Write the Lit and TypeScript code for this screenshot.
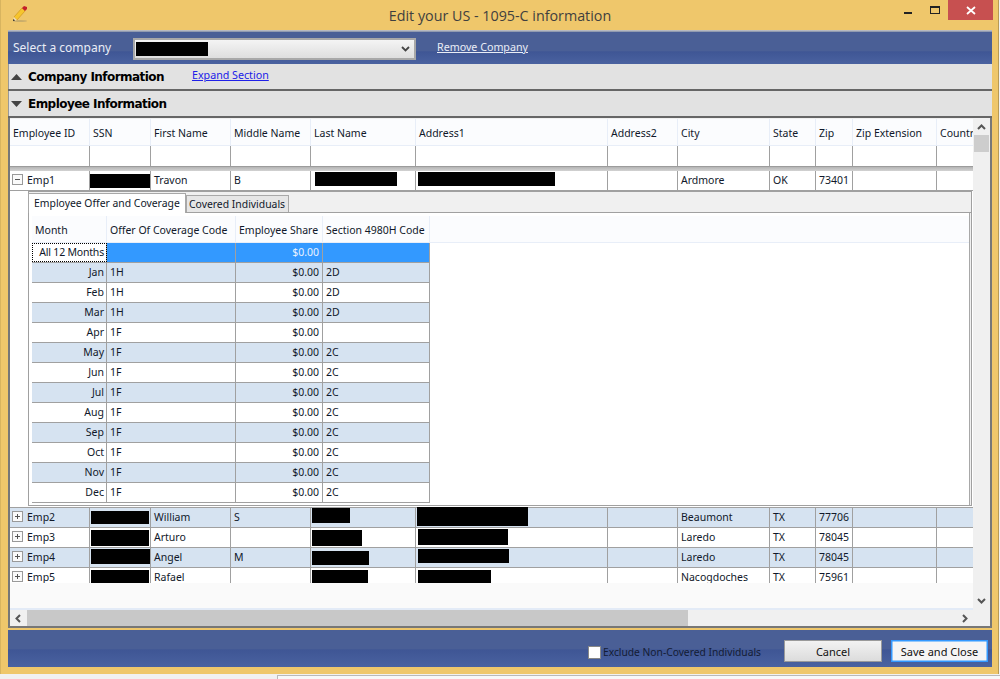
import { LitElement, html, css } from "lit";
import { customElement } from "lit/decorators.js";

type R = [number, number, number, number];
interface Emp { id: string; first: string; middle: string; city: string; state: string; zip: string; ssn: R; last: R; addr: R; }

const HEAD = ["Employee ID", "SSN", "First Name", "Middle Name", "Last Name", "Address1", "Address2", "City", "State", "Zip", "Zip Extension", "Country"];
const emps: Emp[] = [
  { id: "Emp2", first: "William", middle: "S", city: "Beaumont", state: "TX", zip: "77706", ssn: [1, 3, 58, 13], last: [1, 0, 38, 15], addr: [1, -1, 111, 19] },
  { id: "Emp3", first: "Arturo", middle: "", city: "Laredo", state: "TX", zip: "78045", ssn: [1, 2, 58, 16], last: [1, 2, 50, 16], addr: [2, 1, 90, 16] },
  { id: "Emp4", first: "Angel", middle: "M", city: "Laredo", state: "TX", zip: "78045", ssn: [1, 1, 59, 15], last: [1, 3, 57, 14], addr: [2, 1, 91, 14] },
  { id: "Emp5", first: "Rafael", middle: "", city: "Nacogdoches", state: "TX", zip: "75961", ssn: [1, 2, 58, 15], last: [1, 2, 56, 15], addr: [2, 2, 73, 15] },
];
const months: [string, string, string][] = [
  ["Jan", "1H", "2D"], ["Feb", "1H", "2D"], ["Mar", "1H", "2D"], ["Apr", "1F", ""], ["May", "1F", "2C"], ["Jun", "1F", "2C"],
  ["Jul", "1F", "2C"], ["Aug", "1F", "2C"], ["Sep", "1F", "2C"], ["Oct", "1F", "2C"], ["Nov", "1F", "2C"], ["Dec", "1F", "2C"],
];

@customElement("app-root")
export class AppRoot extends LitElement {
  static styles = css`
    :host { display: block; width: 1000px; height: 679px; background: #f1f1f1; overflow: hidden;
      font-family: "Noto Sans", "Open Sans", sans-serif; font-size: 10.5px; color: #10182a; }
    * { box-sizing: border-box; }
    .window { height: 674px; width: 999px; background: #efc76b; border-left: 1px solid #d8b45f; border-right: 1px solid #b79a55; display: flex; flex-direction: column; }
    .below { height: 4px; margin: 1px 0 0 277px; border-top: 1px solid #b9b9b9; border-left: 1px solid #b9b9b9; background: #f8f8f8; }
    .titlebar { height: 30px; flex: none; display: grid; grid-template-columns: 1fr auto 1fr; }
    .pencil { margin: 5px 0 0 10px; }
    .title { font: 14.3px "Open Sans", sans-serif; color: #3f3f3f; padding-top: 6px; margin-left: 1px; }
    .winbtns { display: flex; justify-content: flex-end; align-items: flex-start; padding-right: 5px; }
    .min { width: 8px; height: 2px; background: #222; margin: 12px 18px 0 0; }
    .max { width: 10px; height: 8px; border: 1px solid #222; border-top-width: 2px; margin: 6px 8px 0 0; }
    .close { width: 45px; height: 20px; background: #c75050; color: #fff; display: flex; align-items: center; justify-content: center; }
    .body { margin-left: 7px; width: 984px; flex: 1; display: flex; flex-direction: column; }
    .topline { height: 2px; background: linear-gradient(#c9c9c9, #7f8ba8); }
    .topbar { height: 32px; background: linear-gradient(#4a5f96 0 58%, #3f5695 62%, #4a62a0); display: flex; align-items: center; color: #e9edf6; font-size: 12px; padding-left: 5px; }
    .topbar .lbl { width: 120px; margin-top: -2px; }
    .select { width: 283px; height: 22px; margin-top: 1px; border: 2px solid #a8a8a8; background: linear-gradient(#f4f4f4, #dedede); display: flex; align-items: center; justify-content: space-between; padding: 0 2px 0 1px; }
    .black { background: #000; }
    .sel-black { width: 72px; height: 14px; }
    .remove { margin: -2px 0 0 21px; color: #e9edf6; text-decoration: underline; font-size: 10.7px; }
    .band { height: 25px; background: #e2e2e2; border-left: 1px solid #999; display: flex; align-items: center; padding-left: 2px; }
    .sep { height: 2px; background: #666; }
    .band b { font: bold 12px "DejaVu Sans", sans-serif; letter-spacing: -0.55px; color: #000; margin-left: 6px; }
    .tri { width: 11px; height: 6px; }
    .expand { margin: -3px 0 0 28px; color: #2020e8; text-decoration: underline; font-size: 10.7px; }
    .gridwrap { height: 510px; border-left: 2px solid #777; border-right: 2px solid #777; border-bottom: 2px solid #777; background: #f0f0f0; display: flex; flex-direction: column; padding-top: 1px; }
    .gridtop { height: 491px; display: flex; }
    .main { width: 963px; display: flex; flex-direction: column; }
    .viewport { height: 464px; overflow: hidden; background: #fff; flex: none; }
    .empty { height: 25px; background: #fafafa; flex: none; }
    .main .bline { height: 2px; background: #e3ebf7; }
    .row { display: grid; grid-template-columns: 80px 61px 80px 80px 105px 192px 70px 92px 46px 37px 84px 37px; width: 963px; }
    .head { height: 27px; background: #fbfcfe; border-bottom: 1px solid #e8eef8; }
    .head > div { border-right: 1px solid #e8eef8; padding: 7px 0 0 3px; white-space: nowrap; overflow: hidden; }
    .filter { height: 20px; background: #fff; }
    .filter > div { border-right: 1px solid #a0a0a0; }
    .bandrow { height: 5px; background: linear-gradient(#8e8e8e, #b8b8b8 30%, #d2d2d2); }
    .data { height: 20px; border-bottom: 1px solid #a0a0a0; background: #fff; }
    .data.alt { background: #d6e3f1; }
    .data > div { border-right: 1px solid #a0a0a0; padding: 2px 0 0 3px; position: relative; white-space: nowrap; }
    .data > div:first-child { padding-left: 17px; }
    .data > div:last-child { border-right: none; }
    .red { position: absolute; background: #000; }
    .exp { position: absolute; left: 2px; top: 3px; width: 11px; height: 11px; border: 1px solid #999; background: #fafafa; }
    .exp::before { content: ""; position: absolute; left: 2px; right: 2px; top: 4px; height: 1px; background: #555; }
    .exp.plus::after { content: ""; position: absolute; top: 2px; bottom: 2px; left: 4px; width: 1px; background: #555; }
    .detail { height: 317px; display: flex; background: #fff; border-bottom: 1px solid #a0a0a0; }
    .indent { width: 18px; flex: none; }
    .panel { width: 944px; height: 315px; background: #f0f0f0; display: flex; flex-direction: column; border: 1px solid #a0a0a0; }
    .tabs { height: 21px; display: flex; align-items: flex-end; flex: none; border-bottom: 1px solid #a0a0a0; margin-left: -1px; font-size: 10.4px; }
    .tab { height: 17px; padding: 1px 0 0 2px; background: #e6e6e6; border: 1px solid #a8a8a8; border-bottom: none; white-space: nowrap; width: 103px; }
    .tab.on { height: 20px; width: 158px; margin-bottom: -1px; background: #fff; padding: 2px 0 0 5px; position: relative; z-index: 1; }
    .inner { width: 941px; height: 292px; background: #fff; border-right: 1px solid #a8a8a8; padding: 3px 0 0 3px; }
    .irow { display: grid; grid-template-columns: 75px 129px 87px 107px; width: 398px; }
    .ihead { height: 27px; background: #fbfcfe; width: 937px; border-bottom: 1px solid #e8eef8; }
    .ihead > div { border-right: 1px solid #e8eef8; padding: 7px 0 0 3px; white-space: nowrap; }
    .idata { height: 20px; border-bottom: 1px solid #a0a0a0; background: #fff; }
    .idata.alt { background: #d6e3f1; }
    .idata.sel { background: #3399ff; color: #e8f2ff; }
    .idata > div { border-right: 1px solid #a0a0a0; padding: 2px 3px 0; white-space: nowrap; }
    .idata > div:first-child { text-align: right; color: #10182a; background: #fff; padding-right: 2px; }
    .idata.alt > div:first-child { background: #d6e3f1; }
    .focus { outline: 1px dotted #000; outline-offset: -1px; letter-spacing: -0.2px; }
    .r { text-align: right; }
    .vscroll { width: 17px; background: #f0f0f0; display: flex; flex-direction: column; align-items: center; padding-top: 5px; }
    .thumbv { width: 15px; height: 17px; background: #cdcdcd; margin-top: 5px; }
    .ar { width: 9px; height: 6px; display: block; }
    .spacer { flex: 1; }
    .hscroll { height: 16px; display: flex; align-items: center; background: #f0f0f0; }
    .thumbh { width: 661px; height: 16px; background: #c8c8c8; margin-left: 6px; }
    .footer { height: 37px; margin-top: 2px; background: linear-gradient(#4a5f96 0 50%, #3f5695 54%, #4a62a0); display: flex; align-items: center; justify-content: flex-end; padding: 5px 4px 0 0; flex: none; }
    .chk { width: 13px; height: 13px; background: #fff; border: 1px solid #888; margin-right: 2px; margin-top: 2px; }
    .chklabel { color: #141c34; font-size: 10.25px; margin: 2px 23px 0 0; }
    .btn { width: 98px; height: 22px; background: linear-gradient(#f2f2f2, #dcdcdc); border: 1px solid #9a9a9a; text-align: center; padding-top: 3px; color: #111; font-size: 11px; }
    .btn.save { width: 97px; margin-left: 9px; background: #f5f5f5; border: 1px solid #3399ff; box-shadow: inset 0 0 0 0.5px #3399ff; }
  `;

  private red(r?: R) {
    if (!r) return "";
    return html`<span class="red" style="left:${r[0]}px;top:${r[1]}px;width:${r[2]}px;height:${r[3]}px"></span>`;
  }

  private empRow(id: string, first: string, middle: string, city: string, state: string, zip: string, ssn: R, last: R, addr: R, alt: boolean, plus: boolean) {
    return html`<div class="row data ${alt ? "alt" : ""}">
      <div><span class="exp ${plus ? "plus" : ""}"></span>${id}</div>
      <div>${this.red(ssn)}</div><div>${first}</div><div>${middle}</div>
      <div>${this.red(last)}</div><div>${this.red(addr)}</div><div></div>
      <div>${city}</div><div>${state}</div><div>${zip}</div><div></div><div></div>
    </div>`;
  }

  private arrow(points: string) {
    return html`<svg class="ar" viewBox="0 0 9 6"><polyline points=${points} fill="none" stroke="#555" stroke-width="2"></polyline></svg>`;
  }

  render() {
    return html`<div class="window">
      <div class="titlebar">
        <svg class="pencil" width="18" height="18" viewBox="0 0 18 18">
          <ellipse cx="9" cy="16" rx="7" ry="1" fill="#c9ad6a"></ellipse>
          <polygon points="3,12 11,3 14,6 6,15" fill="#f6c52d" stroke="#c98d1a" stroke-width=".6"></polygon>
          <polygon points="11,3 13,1 16,2 16,4 14,6" fill="#c4202a"></polygon>
          <polygon points="3,12 6,15 2,16" fill="#f2dfb6"></polygon>
          <polygon points="2.5,14 4,15.4 2,16" fill="#111"></polygon>
        </svg>
        <div class="title">Edit your US - 1095-C information</div>
        <div class="winbtns"><div class="min"></div><div class="max"></div>
          <div class="close"><svg width="10" height="9" viewBox="0 0 10 9"><path d="M1 1l8 7M9 1l-8 7" stroke="#fff" stroke-width="1.8"></path></svg></div></div>
      </div>
      <div class="body">
        <div class="topline"></div>
        <div class="topbar">
          <span class="lbl">Select a company</span>
          <div class="select"><div class="black sel-black"></div>
            <svg width="9" height="6" viewBox="0 0 9 6" style="margin-right:2px"><polyline points="1,1 4.5,4.5 8,1" fill="none" stroke="#444" stroke-width="1.8"></polyline></svg></div>
          <span class="remove">Remove Company</span>
        </div>
        <div class="band">
          <svg class="tri" viewBox="0 0 11 6"><polygon points="0,6 5.5,0 11,6" fill="#444"></polygon></svg>
          <b>Company Information</b><span class="expand">Expand Section</span>
        </div>
        <div class="sep"></div>
        <div class="band">
          <svg class="tri" viewBox="0 0 11 6"><polygon points="0,0 5.5,6 11,0" fill="#444"></polygon></svg>
          <b>Employee Information</b>
        </div>
        <div class="sep"></div>
        <div class="gridwrap">
          <div class="gridtop">
            <div class="main">
              <div class="viewport">
                <div class="row head">${HEAD.map((h) => html`<div>${h}</div>`)}</div>
                <div class="row filter">${HEAD.map(() => html`<div></div>`)}</div>
                <div class="bandrow"></div>
                ${this.empRow("Emp1", "Travon", "B", "Ardmore", "OK", "73401", [0, 3, 60, 14], [4, 1, 82, 14], [2, 1, 137, 14], false, false)}
                <div class="detail">
                  <div class="indent"></div>
                  <div class="panel">
                    <div class="tabs">
                      <div class="tab on">Employee Offer and Coverage</div>
                      <div class="tab">Covered Individuals</div>
                    </div>
                    <div class="inner">
                      <div class="irow ihead"><div>Month</div><div>Offer Of Coverage Code</div><div>Employee Share</div><div>Section 4980H Code</div></div>
                      <div class="irow idata sel"><div class="focus">All 12 Months</div><div></div><div class="r">$0.00</div><div></div></div>
                      ${months.map((m, i) => html`<div class="irow idata ${i % 2 === 0 ? "alt" : ""}"><div>${m[0]}</div><div>${m[1]}</div><div class="r">$0.00</div><div>${m[2]}</div></div>`)}
                    </div>
                  </div>
                </div>
                ${emps.map((e, i) => this.empRow(e.id, e.first, e.middle, e.city, e.state, e.zip, e.ssn, e.last, e.addr, i % 2 === 0, true))}
              </div>
              <div class="empty"></div>
              <div class="bline"></div>
            </div>
            <div class="vscroll">
              ${this.arrow("1,5 4.5,1.5 8,5")}
              <div class="thumbv"></div>
              <div class="spacer"></div>
              ${this.arrow("1,1 4.5,4.5 8,1")}
              <div style="height:6px"></div>
            </div>
          </div>
          <div class="hscroll">
            <svg width="6" height="9" viewBox="0 0 6 9" style="margin-left:5px"><polyline points="5,1 1.5,4.5 5,8" fill="none" stroke="#555" stroke-width="2"></polyline></svg>
            <div class="thumbh"></div><div class="spacer"></div>
            <svg width="6" height="9" viewBox="0 0 6 9" style="margin-right:22px"><polyline points="1,1 4.5,4.5 1,8" fill="none" stroke="#555" stroke-width="2"></polyline></svg>
          </div>
        </div>
        <div class="footer">
          <div class="chk"></div><span class="chklabel">Exclude Non-Covered Individuals</span>
          <div class="btn">Cancel</div><div class="btn save">Save and Close</div>
        </div>
      </div>
    </div>
    <div class="below"></div>`;
  }
}
